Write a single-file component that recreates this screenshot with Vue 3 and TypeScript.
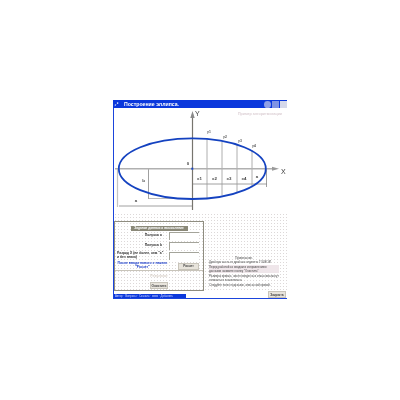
<script setup lang="ts">
const xs = [207, 222, 237, 252]
const ys = [138.8, 142, 145, 150]
</script>

<template>
  <div class="window">
    <div class="titlebar">
      <svg class="appicon" viewBox="0 0 6 6"><path d="M1 5 L3 3 L1 3Z" fill="#fff" /><rect x="3.5" y="0.5" width="1.6" height="1.6" fill="#fff" /></svg>
      <span class="title">Построение эллипса.</span>
      <span class="ctrls">
        <i class="ctrl round"></i><i class="ctrl"></i><i class="ctrl light"></i>
      </span>
    </div>
    <div class="body">
      <svg class="diagram" viewBox="114 108 173 105" width="173" height="105">
        <text x="260" y="114.5" class="faint" text-anchor="middle">Пример алгоритмизации</text>
        <g fill="none">
          <path d="M117.5 168.7 V207" stroke="#c4c4c4" stroke-width="1.2" />
          <path d="M148.5 168.7 V199" stroke="#888" stroke-width="0.8" />
          <path d="M148.5 198.5 H176" stroke="#aaa" stroke-width="0.8" />
          <path d="M119 206 H192" stroke="#888" stroke-width="0.8" />
          <path d="M192.5 184 H267" stroke="#888" stroke-width="0.8" />
          <path d="M266.5 168.7 V187" stroke="#888" stroke-width="0.8" />
          <path v-for="(x, i) in xs" :key="x" :d="`M${x} ${ys[i]} V${2 * 168.7 - ys[i]}`" stroke="#9a9a9a" stroke-width="0.8" />
        </g>
        <path d="M192.5 114 V210" stroke="#77756e" stroke-width="1.2" />
        <path d="M192.5 111 l-2.2 7 h4.4z" fill="#8a8a8a" />
        <path d="M115 168.7 H275" stroke="#b0b0b0" stroke-width="1.6" />
        <path d="M279 168.7 l-7 -2 v4z" fill="#9a9a9a" />
        <ellipse cx="192.3" cy="168.7" rx="73.5" ry="30.3" fill="none" stroke="#1442c0" stroke-width="1.8" />
        <rect x="191.3" y="167.7" width="2" height="2" fill="#1746c4" />
        <text x="195" y="116" class="axis">Y</text>
        <text x="281" y="174" class="axis">X</text>
        <text x="188" y="165" class="lbl" text-anchor="middle">0</text>
        <text x="143.5" y="182" class="lbl" text-anchor="middle">b</text>
        <text x="136" y="202" class="lbl" text-anchor="middle">a</text>
        <text x="257" y="178" class="lbl" text-anchor="middle">a</text>
        <text x="199.5" y="180" class="lbl" text-anchor="middle">x1</text>
        <text x="214.5" y="180" class="lbl" text-anchor="middle">x2</text>
        <text x="229" y="180" class="lbl" text-anchor="middle">x3</text>
        <text x="244" y="180" class="lbl" text-anchor="middle">x4</text>
        <text x="209" y="133" class="small" text-anchor="middle">y1</text>
        <text x="225" y="138" class="small" text-anchor="middle">y2</text>
        <text x="240" y="142" class="small" text-anchor="middle">y3</text>
        <text x="254" y="147" class="small" text-anchor="middle">y4</text>
      </svg>
      <div class="lower">
        <section class="panel">
          <h3 class="panel-head">Задание данных и вычисление</h3>
          <div class="field"><label>Полуось a</label><input class="box" /></div>
          <div class="field"><label>Полуось b</label><input class="box" /></div>
          <div class="field wide"><label class="left">Разряд Х (не более, чем "а"<br />и без знака)</label><input class="box" /></div>
          <div class="field action">
            <label class="blue">После ввода нового х нажать<br />"Расчет"</label>
            <button class="btn calc">Расчет</button>
          </div>
          <div class="result">Результат</div>
          <button class="btn clear">Очистить</button>
        </section>
        <section class="notes">
          <p class="center">Примечание.</p>
          <p>Дробную часть от дробных отделять ТОЧКОЙ</p>
          <p class="hl">Перед работой со вводом и исправлением данными нажмите кнопку "Очистить"</p>
          <p>Размеры кривых, чисел введенных и массива могут отличаться значительно.</p>
          <p>Следуйте полю подсказок, описанной кривой.</p>
        </section>
      </div>
      <div class="footer">
        <div class="links">Автор · Вопросы · Скачать · www · Добавить</div>
        <button class="btn close">Закрыть</button>
      </div>
    </div>
  </div>
</template>

<style scoped>
.window {
  margin: 100px 0 0 113px;
  width: 174px;
  font-family: "Liberation Sans", Arial, sans-serif;
  background: #fff;
  color: #333;
  box-sizing: border-box;
  filter: blur(0.3px);
}
.titlebar {
  height: 8px;
  background: #0b38dc;
  display: flex;
  align-items: center;
  padding: 0 0 0 1px;
  gap: 5px;
}
.appicon { width: 5px; height: 5px; }
.title { color: #fff; font-size: 5.2px; font-weight: 700; white-space: nowrap; }
.ctrls { margin-left: auto; display: flex; gap: 0.5px; }
.ctrl { width: 7.3px; height: 7px; background: #7f93e4; display: block; }
.ctrl.round { border-radius: 50%; background: #8fa0e6; }
.ctrl.light { background: #d5d8ea; }
.body {
  border-left: 1px solid #1b45dc;
  background: #fff;
}
.diagram { display: block; }
.faint { font: 700 3.6px "Liberation Sans", sans-serif; fill: #dccfd4; }
.axis { font: 400 7px "Liberation Sans", sans-serif; fill: #3a3a3a; }
.lbl { font: 700 4.4px "Liberation Sans", sans-serif; fill: #444; }
.small { font: 700 3.4px "Liberation Sans", sans-serif; fill: #555; }
.lower {
  display: flex;
  height: 78px;
  background-color: #fff;
  background-image: radial-gradient(circle, #dcd8d8 0.6px, transparent 0.7px);
  background-size: 3px 3px;
}
.panel {
  width: 90px;
  height: 70px;
  margin-top: 8px;
  box-sizing: border-box;
  border: 1px solid #8f8d80;
  display: flex;
  flex-direction: column;
  align-items: center;
  padding-top: 4px;
}
.panel-head {
  margin: 0 0 1px;
  width: 57px;
  background: #8a8878;
  color: #fff;
  font-size: 3.2px;
  line-height: 5px;
  text-align: center;
  font-weight: 700;
}
.field {
  display: flex;
  width: 100%;
  justify-content: flex-end;
  align-items: center;
  gap: 7px;
  padding: 0 4px 0 2px;
  box-sizing: border-box;
  margin-bottom: 2px;
  height: 8px;
}
.field label { font-size: 3.4px; font-weight: 700; color: #333; line-height: 3.8px; flex: 1; min-width: 0; text-align: right; white-space: nowrap; }
.field.wide { gap: 3px; }
.field label.left { text-align: left; }
.field label.blue { color: #1a3cc8; text-align: center; }
.box {
  width: 30px;
  height: 8px;
  padding: 0;
  box-sizing: border-box;
  border: 0;
  border-top: 1px solid #a4a49a;
  border-left: 1px solid #a4a49a;
  background: #fff;
}
.action { margin-bottom: 0; gap: 10px; }
.btn {
  padding: 0;
  background: #e8e4dc;
  border: 1px solid #c8c4ba;
  color: #444;
  font: 700 3.2px "Liberation Sans", sans-serif;
}
.calc { width: 21px; height: 7px; }
.result {
  width: 100%;
  border-top: 1px solid #c8c4ba;
  text-align: center;
  font-size: 3.6px;
  font-weight: 700;
  color: #d8d0c8;
  padding-top: 2px;
  line-height: 6px;
}
.clear { width: 18px; height: 7px; margin-top: 3px; }
.notes {
  flex: 1;
  padding: 43px 8px 0 5px;
  min-width: 0;
}
.notes p { margin: 0 0 1px; font-size: 2.9px; line-height: 4px; color: #444; }
.notes .center { text-align: center; margin-bottom: 0; }
.notes .hl { background: #efe6ea; }
.footer {
  height: 8px;
  display: flex;
  justify-content: space-between;
  align-items: flex-end;
  border-bottom: 1px solid #1b45dc;
  box-sizing: border-box;
  padding-right: 1px;
}
.links {
  width: 72px;
  height: 4px;
  background: #0b38dc;
  color: #cfd8ff;
  font-size: 2.8px;
  line-height: 4px;
  white-space: nowrap;
  overflow: hidden;
  padding-left: 1px;
  box-sizing: border-box;
}
.close { width: 18px; height: 7px; align-self: flex-start; }
</style>
